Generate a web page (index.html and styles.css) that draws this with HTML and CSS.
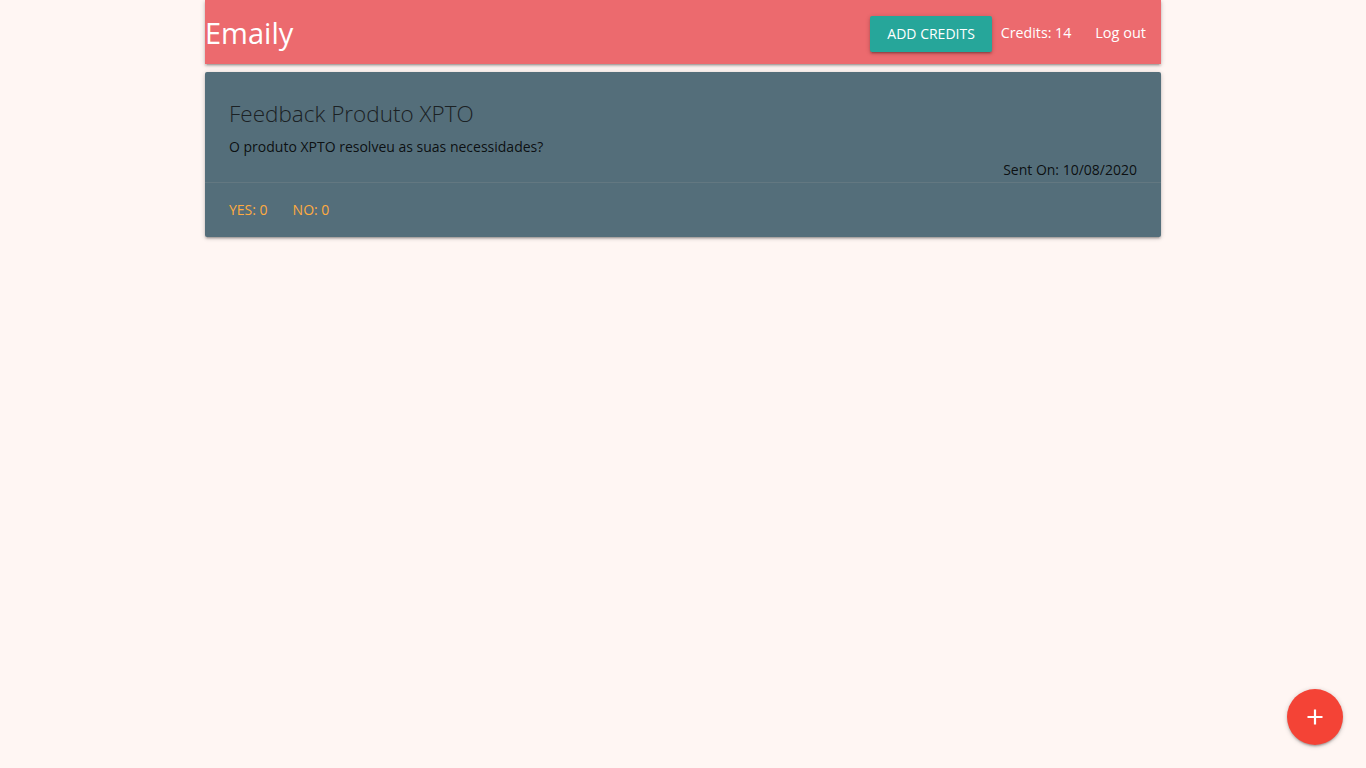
FILE: index.html
```html
<!DOCTYPE html>
<html lang="pt">
<head>
<meta charset="utf-8">
<title>Emaily</title>
<link rel="stylesheet" href="styles.css">
</head>
<body>
<div class="container">
  <nav class="nav">
    <a class="brand" href="#">Emaily</a>
    <ul class="nav-links">
      <li><a class="btn" href="#">Add Credits</a></li>
      <li><span class="credits">Credits: 14</span></li>
      <li><a class="logout" href="#">Log out</a></li>
    </ul>
  </nav>
  <div class="card">
    <div class="card-content">
      <span class="card-title">Feedback Produto XPTO</span>
      <p class="body-text">O produto XPTO resolveu as suas necessidades?</p>
      <p class="sent">Sent On: 10/08/2020</p>
    </div>
    <div class="card-action">
      <a href="#">Yes: 0</a>
      <a href="#">No: 0</a>
    </div>
  </div>
</div>
<a class="fab" href="#" aria-label="Add">
  <svg width="18" height="18" viewBox="0 0 18 18"><path d="M9 1.5v15M1.5 9h15" stroke="#fff" stroke-width="2.2" fill="none"/></svg>
</a>
</body>
</html>
```
FILE: styles.css
```css
* { box-sizing: border-box; }
html, body { margin: 0; padding: 0; }
body {
  background: #fff6f3;
  font-family: "Open Sans", "Noto Sans", sans-serif;
  font-size: 14px;
  color: rgba(0,0,0,0.87);
  min-height: 768px;
}
a { text-decoration: none; color: inherit; }
.container {
  width: 956px;
  margin: 0 auto;
}
.nav {
  height: 64px;
  background: #ec6a6e;
  color: #fff;
  display: flex;
  align-items: center;
  justify-content: space-between;
  box-shadow: 0 2px 2px 0 rgba(0,0,0,0.14), 0 3px 1px -2px rgba(0,0,0,0.12), 0 1px 5px 0 rgba(0,0,0,0.2);
}
.brand {
  font-size: 29px;
  line-height: 64px;
  margin-top: 2px;
}
.nav-links {
  list-style: none;
  margin: 0;
  padding: 0 15px 0 0;
  display: flex;
  align-items: center;
  height: 64px;
}
.nav-links li { display: flex; align-items: center; }
.btn {
  display: inline-block;
  height: 36px;
  line-height: 36px;
  padding: 0 17px;
  background: #26a69a;
  color: #fff;
  text-transform: uppercase;
  font-size: 14px;
  border-radius: 2px;
  margin-top: 4px;
  margin-right: 9px;
  box-shadow: 0 2px 2px 0 rgba(0,0,0,0.14), 0 3px 1px -2px rgba(0,0,0,0.12), 0 1px 5px 0 rgba(0,0,0,0.2);
}
.credits { font-size: 14.2px; margin-right: 24px; }
.logout { font-size: 14.5px; }
.card {
  margin-top: 8px;
  background: #546e7a;
  border-radius: 2px;
  box-shadow: 0 2px 2px 0 rgba(0,0,0,0.14), 0 3px 1px -2px rgba(0,0,0,0.12), 0 1px 5px 0 rgba(0,0,0,0.2);
}
.card-content {
  padding: 26px 24px 1px;
}
.card-title {
  display: block;
  font-size: 22.5px;
  font-weight: 300;
  line-height: 32px;
  margin-bottom: 6px;
  color: #1b2124;
}
.card-content p {
  margin: 0;
  line-height: 22px;
}
.sent { text-align: right; margin-top: 1px !important; }
.card-action {
  border-top: 1px solid rgba(160,160,160,0.2);
  padding: 16px 24px;
  line-height: 22px;
  display: flex;
  gap: 25px;
}
.card-action a {
  color: #ffab40;
  text-transform: uppercase;
  font-size: 14px;
}
.fab {
  position: fixed;
  right: 23px;
  bottom: 23px;
  width: 56px;
  height: 56px;
  border-radius: 50%;
  background: #f44336;
  display: flex;
  align-items: center;
  justify-content: center;
  box-shadow: 0 2px 2px 0 rgba(0,0,0,0.14), 0 3px 1px -2px rgba(0,0,0,0.12), 0 1px 5px 0 rgba(0,0,0,0.2);
}
```
